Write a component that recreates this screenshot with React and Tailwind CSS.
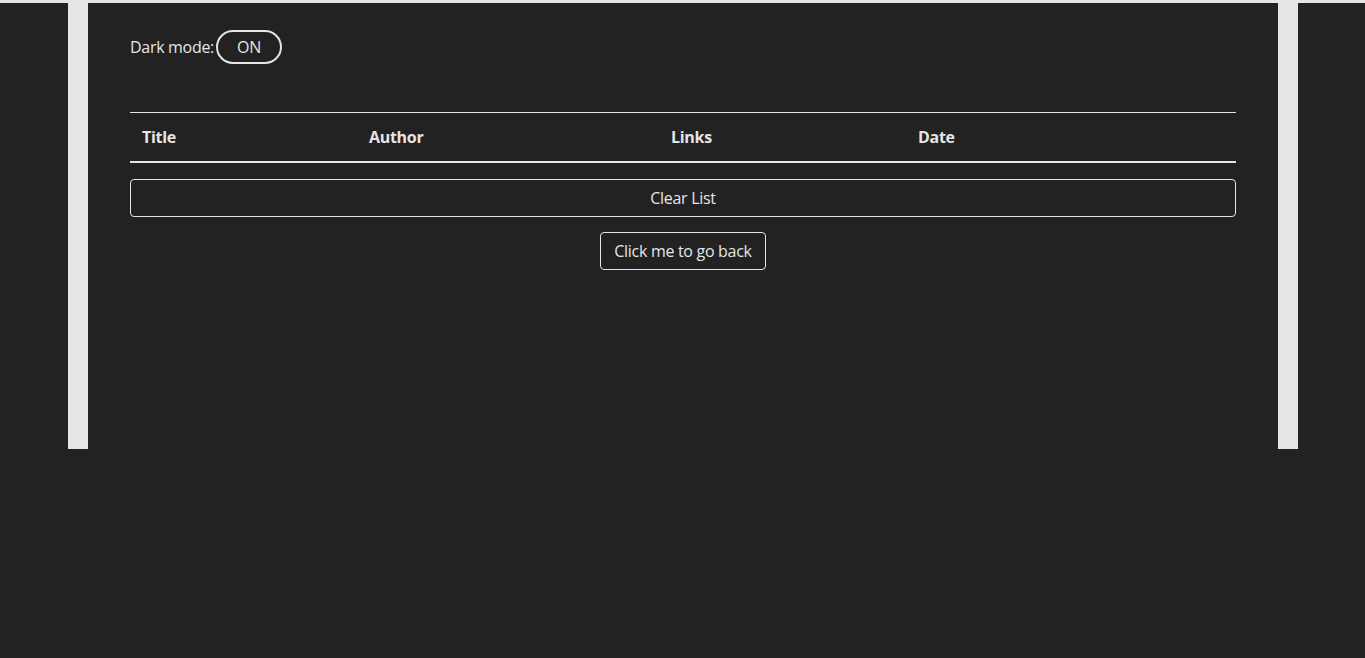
import React, { useState } from 'react';

function App() {
  const [dark, setDark] = useState(true);
  const [items, setItems] = useState([]);

  return (
    <div className="min-h-[658px] bg-[#222222] text-[#e5e5e5] text-base tracking-[-0.3px]" style={{ fontFamily: '"Open Sans", "Noto Sans", sans-serif' }}>
      <div className="h-[3px] bg-[#e5e5e5]" />
      <div className="ml-[68px] w-[1230px] px-5 bg-[#e5e5e5]">
        <div className="h-[446px] bg-[#222222] px-[42px] pt-[27px]">
          <div className="flex items-center h-[34px]">
            <span>Dark mode:</span>
            <button
              className="ml-[2px] h-[34px] w-[66px] rounded-full border-2 border-[#e5e5e5] text-center"
              onClick={() => setDark(!dark)}
            >
              {dark ? 'ON' : 'OFF'}
            </button>
          </div>

          <div className="mt-[48px] border-t border-[#e5e5e5] border-b-2">
            <div className="grid grid-cols-[227px_302px_247px_1fr] h-[48px] items-center font-bold">
              <div className="px-3">Title</div>
              <div className="px-3">Author</div>
              <div className="px-3">Links</div>
              <div className="px-3">Date</div>
            </div>
            {items.map((item, index) => (
              <div className="grid grid-cols-[227px_302px_247px_1fr]" key={index}>
                <div className="px-3">{item.title}</div>
                <div className="px-3">{item.author}</div>
                <div className="px-3">{item.links}</div>
                <div className="px-3">{item.date}</div>
              </div>
            ))}
          </div>

          <button
            className="mt-4 w-full h-[38px] rounded border border-[#e5e5e5] text-center"
            onClick={() => setItems([])}
          >
            Clear List
          </button>

          <div className="flex justify-center mt-[15px]">
            <button className="h-[38px] w-[166px] rounded border border-[#e5e5e5]">
              Click me to go back
            </button>
          </div>
        </div>
      </div>
    </div>
  );
}

export default App;
